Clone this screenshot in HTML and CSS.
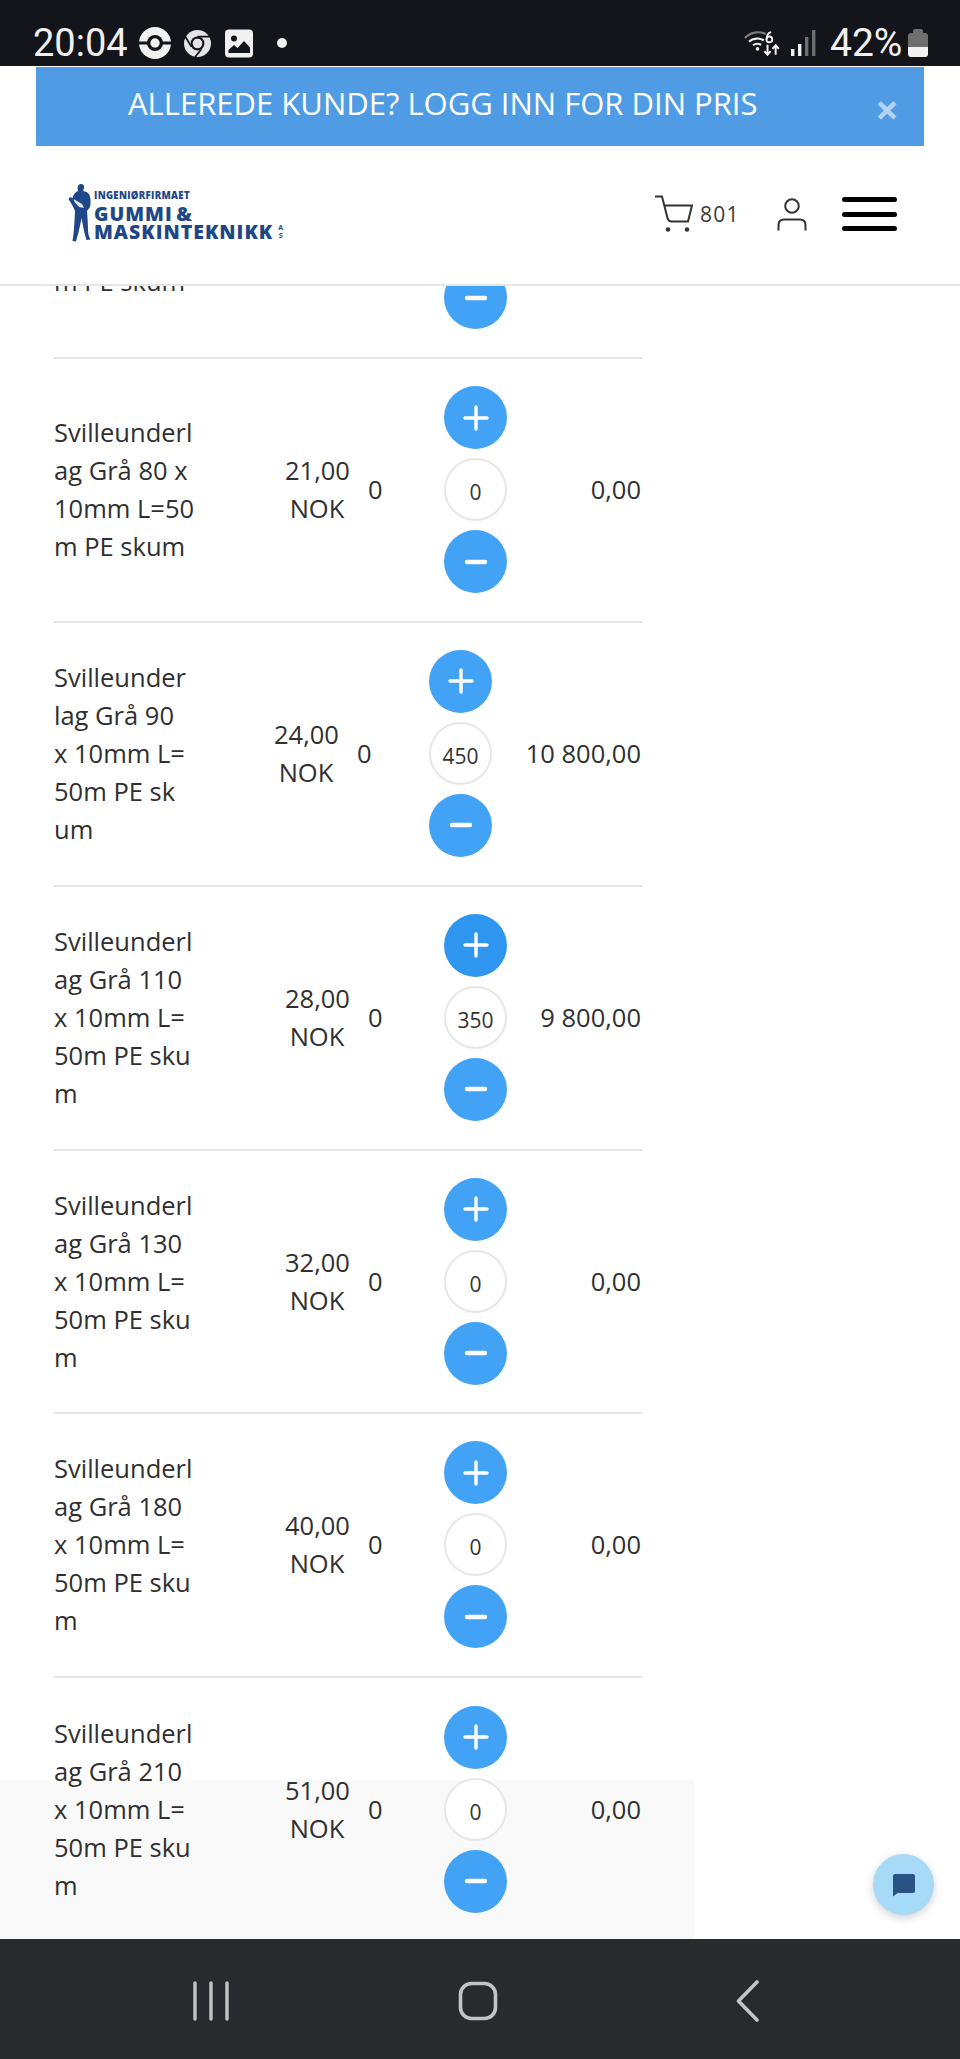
FILE: index.html
```html
<!DOCTYPE html>
<html lang="no">
<head>
<meta charset="utf-8">
<title>Gummi &amp; Maskinteknikk</title>
<link rel="stylesheet" href="styles.css">
</head>
<body>
<div class="phone">
  <div class="statusbar">
    <div class="status-left">
      <span class="clock">20:04</span>
      <svg class="pokeball" width="32" height="32" viewBox="0 0 34 34"><circle cx="17" cy="17" r="17" fill="#f1f1f1"/><rect x="0" y="15.4" width="34" height="3.2" fill="#14151a"/><circle cx="17" cy="17" r="8.5" fill="#14151a"/><circle cx="17" cy="17" r="5" fill="#f1f1f1"/></svg>
      <svg class="chrome" width="27" height="27" viewBox="0 0 28 28"><circle cx="14" cy="14" r="14" fill="#e4e4e4"/><circle cx="14" cy="14" r="7.2" fill="#14151a"/><circle cx="14" cy="14" r="5" fill="#e4e4e4"/><path d="M14 6.8H27M7.8 17.5L1.5 7M18 20L11.5 28" stroke="#14151a" stroke-width="1.8" fill="none"/></svg>
      <svg class="picture" width="28" height="29" viewBox="0 0 28 28"><rect width="28" height="28" rx="4" fill="#f1f1f1"/><circle cx="9" cy="9" r="3" fill="#14151a"/><path d="M3.5 23.5V20.5L9 15.5L12.5 18.5L19 11.5L25 18V23.5Z" fill="#14151a"/></svg>
      <span class="dot"></span>
    </div>
    <div class="status-right">
      <svg class="wifi" width="38" height="28" viewBox="0 0 42 30"><path d="M1 9.5C7 3 16 1.5 24 5" stroke="#7c7c7c" stroke-width="2.4" fill="none"/><path d="M5.5 13.5C10 9.5 17 9 22 12" stroke="#f1f1f1" stroke-width="2.4" fill="none"/><path d="M10 17.5C12.5 15.5 16 15.5 19 17" stroke="#f1f1f1" stroke-width="2.4" fill="none"/><circle cx="15" cy="21.5" r="2" fill="#f1f1f1"/><path d="M26 17V27.5M22.5 24L26 28L29.5 24M35 28V17.5M31.5 21.5L35 17.5L38.5 21.5" stroke="#f1f1f1" stroke-width="2.2" fill="none"/><circle cx="28" cy="11" r="3.2" stroke="#f1f1f1" stroke-width="2" fill="none"/><path d="M25 11C25 6 27 3.5 30 3" stroke="#f1f1f1" stroke-width="2" fill="none"/></svg>
      <svg class="signal" width="25" height="26" viewBox="0 0 25 26"><rect x="0" y="19" width="3.4" height="7" fill="#f1f1f1"/><rect x="7" y="14" width="3.4" height="12" fill="#f1f1f1"/><rect x="14" y="7" width="3.4" height="19" fill="#6f6f6f"/><rect x="21" y="0" width="3.4" height="26" fill="#6f6f6f"/></svg>
      <span class="battery-text">42%</span>
      <span class="battery"><span class="battery-cap"></span><span class="battery-body"></span></span>
    </div>
  </div>

  <div class="site-top">
    <div class="banner">
      <span class="banner-text">ALLEREDE KUNDE? LOGG INN FOR DIN PRIS</span>
      <span class="banner-close">×</span>
    </div>
    <header class="site-header">
      <a class="logo">
        <svg class="logo-figure" width="24" height="58" viewBox="0 0 24 58"><path d="M13 0C15.5 0 16.5 2 16 4.5L15 7C18 7.5 20.5 8.5 21.5 11C23 15 23 20 21.5 24C20.5 25 19.5 26 19 27C19.5 33 20 40 20 46C20 50 21 53 22.5 55.5L18.5 56C16.5 50 15 42 13.5 34C12.5 40 10.5 49 8 57.5L4.5 57C6 48 6.5 38 7 27C5.5 23 3 19 0.5 15L2 13L4.5 14C5.5 11 7 8 10 7C9 3 10 0 13 0Z" fill="#1f4788"/><path d="M5.5 15L14 20L16 24L11 23L6.5 18Z" fill="#dfe6f1"/></svg>
        <span class="logo-text">
          <span class="logo-small">INGENIØRFIRMAET</span>
          <span class="logo-big">GUMMI &amp;</span>
          <span class="logo-big">MASKINTEKNIKK<span class="logo-as">A<br>S</span></span>
        </span>
      </a>
      <div class="header-tools">
        <svg class="cart" width="40" height="38" viewBox="0 0 40 38"><path d="M1 1.5H8L13.5 23Q14.5 26.5 17.5 26.5H34L38 10.5H10" stroke="#333" stroke-width="2" fill="none"/><circle cx="14" cy="34.5" r="2.3" fill="#333"/><circle cx="33" cy="34.5" r="2.3" fill="#333"/></svg>
        <span class="cart-count">801</span>
        <svg class="user" width="30" height="33" viewBox="0 0 30 33"><circle cx="15" cy="8" r="6.8" stroke="#333" stroke-width="2" fill="none"/><path d="M1.5 32.5V27C1.5 23 4 21.5 7 21.5H23C26 21.5 28.5 23 28.5 27V32.5" stroke="#333" stroke-width="2" fill="none"/></svg>
        <span class="burger"><span></span><span></span><span></span></span>
      </div>
    </header>
  </div>

  <main class="viewport">
    <div class="footer-band"></div>
    <div class="list">
      <div class="row row-tail">
        <div class="name name-tail">m PE skum</div>
        <div class="stepper stepper-tail"><button class="step"><svg width="26" height="26" viewBox="0 0 26 26"><path d="M4 13H22" stroke="#fff" stroke-width="4.4" stroke-linecap="round"/></svg></button></div>
      </div>
      <div class="row">
        <div class="name">Svilleunderlag Grå 80 x 10mm L=50m PE skum</div>
        <div class="price">21,00 NOK</div><div class="qty">0</div>
        <div class="stepper"><button class="step"><svg width="26" height="26" viewBox="0 0 26 26"><path d="M13 2V24M2 13H24" stroke="#fff" stroke-width="3.4" stroke-linecap="round"/></svg></button><span class="count">0</span><button class="step"><svg width="26" height="26" viewBox="0 0 26 26"><path d="M4 13H22" stroke="#fff" stroke-width="4.4" stroke-linecap="round"/></svg></button></div>
        <div class="total">0,00</div>
      </div>
      <div class="row row-wide">
        <div class="name">Svilleunderlag Grå 90 x 10mm L=50m PE skum</div>
        <div class="price">24,00 NOK</div><div class="qty">0</div>
        <div class="stepper"><button class="step"><svg width="26" height="26" viewBox="0 0 26 26"><path d="M13 2V24M2 13H24" stroke="#fff" stroke-width="3.4" stroke-linecap="round"/></svg></button><span class="count">450</span><button class="step"><svg width="26" height="26" viewBox="0 0 26 26"><path d="M4 13H22" stroke="#fff" stroke-width="4.4" stroke-linecap="round"/></svg></button></div>
        <div class="total">10 800,00</div>
      </div>
      <div class="row">
        <div class="name">Svilleunderlag Grå 110 x 10mm L=50m PE skum</div>
        <div class="price">28,00 NOK</div><div class="qty">0</div>
        <div class="stepper"><button class="step step-active"><svg width="26" height="26" viewBox="0 0 26 26"><path d="M13 2V24M2 13H24" stroke="#fff" stroke-width="3.4" stroke-linecap="round"/></svg></button><span class="count">350</span><button class="step"><svg width="26" height="26" viewBox="0 0 26 26"><path d="M4 13H22" stroke="#fff" stroke-width="4.4" stroke-linecap="round"/></svg></button></div>
        <div class="total">9 800,00</div>
      </div>
      <div class="row">
        <div class="name">Svilleunderlag Grå 130 x 10mm L=50m PE skum</div>
        <div class="price">32,00 NOK</div><div class="qty">0</div>
        <div class="stepper"><button class="step"><svg width="26" height="26" viewBox="0 0 26 26"><path d="M13 2V24M2 13H24" stroke="#fff" stroke-width="3.4" stroke-linecap="round"/></svg></button><span class="count">0</span><button class="step"><svg width="26" height="26" viewBox="0 0 26 26"><path d="M4 13H22" stroke="#fff" stroke-width="4.4" stroke-linecap="round"/></svg></button></div>
        <div class="total">0,00</div>
      </div>
      <div class="row">
        <div class="name">Svilleunderlag Grå 180 x 10mm L=50m PE skum</div>
        <div class="price">40,00 NOK</div><div class="qty">0</div>
        <div class="stepper"><button class="step"><svg width="26" height="26" viewBox="0 0 26 26"><path d="M13 2V24M2 13H24" stroke="#fff" stroke-width="3.4" stroke-linecap="round"/></svg></button><span class="count">0</span><button class="step"><svg width="26" height="26" viewBox="0 0 26 26"><path d="M4 13H22" stroke="#fff" stroke-width="4.4" stroke-linecap="round"/></svg></button></div>
        <div class="total">0,00</div>
      </div>
      <div class="row row-last">
        <div class="name">Svilleunderlag Grå 210 x 10mm L=50m PE skum</div>
        <div class="price">51,00 NOK</div><div class="qty">0</div>
        <div class="stepper"><button class="step"><svg width="26" height="26" viewBox="0 0 26 26"><path d="M13 2V24M2 13H24" stroke="#fff" stroke-width="3.4" stroke-linecap="round"/></svg></button><span class="count">0</span><button class="step"><svg width="26" height="26" viewBox="0 0 26 26"><path d="M4 13H22" stroke="#fff" stroke-width="4.4" stroke-linecap="round"/></svg></button></div>
        <div class="total">0,00</div>
      </div>
    </div>
    <button class="chat"><svg width="24" height="24" viewBox="0 0 24 24"><path d="M3 1H21C22 1 23 2 23 3V18C23 19 22 20 21 20H5.5L1 23.5V3C1 2 2 1 3 1Z" fill="#2a5384"/></svg></button>
  </main>

  <nav class="navbar">
    <svg class="nav-recent" width="38" height="40" viewBox="0 0 38 40"><path d="M3 2V38M19 2V38M35 2V38" stroke="#c4c4c4" stroke-width="3.4" stroke-linecap="round"/></svg>
    <svg class="nav-home" width="40" height="40" viewBox="0 0 40 40"><rect x="2.5" y="2.5" width="35" height="35" rx="11" stroke="#c4c4c4" stroke-width="3.6" fill="none"/></svg>
    <svg class="nav-back" width="26" height="42" viewBox="0 0 26 42"><path d="M22 2L3.5 21L22 40" stroke="#c4c4c4" stroke-width="3.6" stroke-linecap="round" stroke-linejoin="round" fill="none"/></svg>
  </nav>
</div>
</body>
</html>
```

FILE: styles.css
```css
* { box-sizing: border-box; }
html, body { margin: 0; padding: 0; }
body { font-family: "Open Sans", "Liberation Sans", sans-serif; color: #303030; background: #fff; }
.phone { width: 960px; height: 2059px; display: flex; flex-direction: column; overflow: hidden; }

.statusbar { height: 66px; flex: none; background: #14151a; display: flex; justify-content: space-between; align-items: center; padding: 20px 32px 0 33px; color: #f1f1f1; }
.status-left, .status-right { display: flex; align-items: center; }
.clock { font-family: Roboto, sans-serif; font-size: 38px; width: 106px; }
.chrome { margin-left: 13px; }
.picture { margin-left: 14px; }
.dot { width: 10px; height: 10px; border-radius: 50%; background: #f1f1f1; margin-left: 24px; }
.signal { margin-left: 9px; }
.battery-text { font-family: Roboto, sans-serif; font-size: 39px; margin-left: 14px; width: 78px; }
.battery { display: flex; flex-direction: column; align-items: center; width: 20px; }
.battery-cap { width: 10px; height: 4px; background: #6e6e6e; border-radius: 2px 2px 0 0; }
.battery-body { width: 20px; height: 24px; border-radius: 3px; background: linear-gradient(#6e6e6e 0 14px, #f1f1f1 14px); }

.site-top { flex: none; background: #fff; position: relative; z-index: 2; border-bottom: 2px solid #e6e6e6; height: 220px; }
.banner { margin: 1px 36px 0; height: 79px; background: #4f9ce4; color: #fff; display: flex; padding: 0 0 0 92px; position: relative; }
.banner-text { font-size: 31px; line-height: 72px; }
.banner-close { position: absolute; right: 25px; top: 18px; font-size: 42px; line-height: 48px; font-weight: 700; color: #b3d3f5; }
.site-header { display: flex; justify-content: space-between; align-items: flex-start; padding: 37px 63px 0 68px; }
.logo { display: flex; gap: 2px; color: #1f4788; margin-top: 1px; }
.logo-text { display: flex; flex-direction: column; padding-top: 5px; }
.logo-small { font-size: 9.6px; font-weight: 800; line-height: 14px; letter-spacing: 0.3px; }
.logo-big { font-size: 19.5px; font-weight: 800; line-height: 18px; letter-spacing: 1px; word-spacing: -2.5px; display: flex; align-items: center; }
.logo-big:nth-child(2) { margin-top: 2px; }
.logo-as { font-size: 7px; line-height: 8px; margin-left: 5px; font-weight: 700; text-align: center; }
.header-tools { display: flex; align-items: center; margin-top: 12px; }
.cart-count { font-size: 21px; letter-spacing: 1.3px; color: #3a3a3a; margin-left: 6px; width: 40px; }
.user { margin-left: 37px; }
.burger { display: flex; flex-direction: column; gap: 9.5px; width: 55px; margin-left: 35px; }
.burger span { height: 5px; border-radius: 3px; background: #000; display: block; }

.viewport { flex: 1; position: relative; overflow: hidden; }
.list { margin: -27px 0 0 0; width: 642px; position: relative; }
.row { margin-left: 54px; display: grid; grid-template-columns: 231px 64px 95px 63px 1fr; align-items: center; padding: 27px 0 29px; border-bottom: 2px solid #e6e6e6; height: 263.85px; font-size: 25.5px; line-height: 38px; }
.row-wide { grid-template-columns: 220px 64px 91px 63px 1fr; }
.row-tail { height: 100px; padding: 0 0 28px; align-items: end; }
.row-last { border-bottom: 0; }
.name, .price, .qty, .total { margin-bottom: 1px; }
.name { width: 141px; word-break: break-all; }
.row-wide .name { width: 133px; }
.row .name-tail { margin-bottom: 29px; }
.price { text-align: center; }
.qty { padding-left: 19px; }
.total { text-align: right; white-space: nowrap; padding-right: 1px; }
.stepper { display: flex; flex-direction: column; gap: 9px; width: 63px; }
.stepper-tail { grid-column: 4; }
.step { width: 63px; height: 63px; border: 0; padding: 0; border-radius: 50%; background: #42a2f6; display: flex; align-items: center; justify-content: center; }
.step-active { background: #2f96f0; }
.count { width: 63px; height: 63px; border-radius: 50%; border: 2px solid #e8e8e8; background: #fff; font-size: 21px; line-height: 64px; text-align: center; color: #333; }

.footer-band { position: absolute; left: 0; top: 1494px; width: 695px; height: 159px; background: #f9f9f9; }
.chat { position: absolute; left: 873px; top: 1568px; width: 61px; height: 61px; border: 0; padding: 0; border-radius: 50%; background: #a6daf7; box-shadow: 0 3px 8px rgba(0,0,0,.18); display: flex; align-items: center; justify-content: center; }

.navbar { height: 120px; flex: none; background: #292a2e; display: flex; align-items: center; padding: 4px 0 0 192px; }
.nav-home { margin-left: 228px; }
.nav-back { margin-left: 237px; }
```
